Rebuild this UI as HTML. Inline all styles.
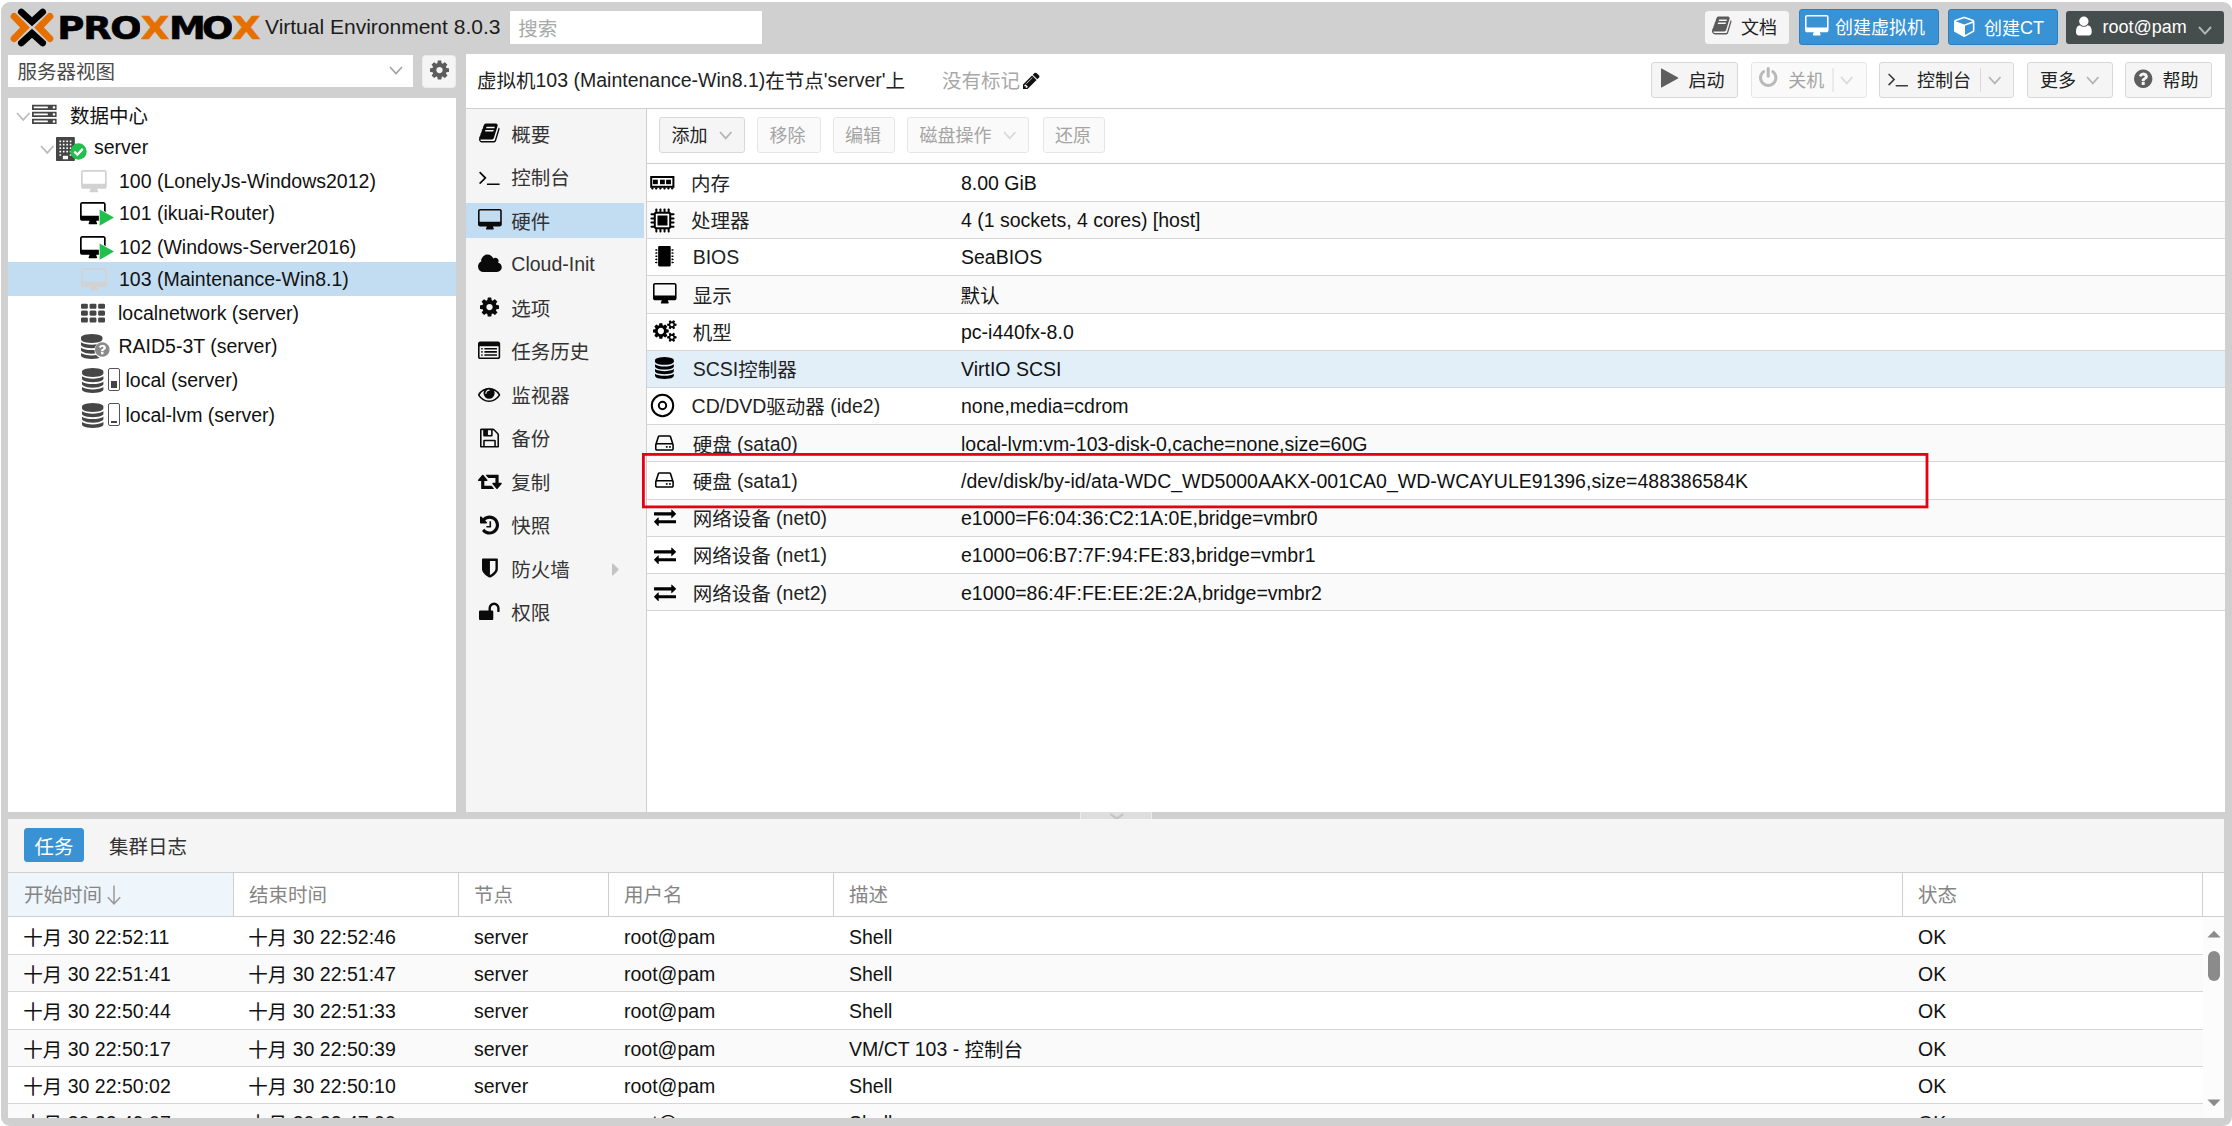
<!DOCTYPE html>
<html lang="zh-CN"><head><meta charset="utf-8"><title>server - Proxmox Virtual Environment</title><style>
html,body{margin:0;padding:0}
body{width:2232px;height:1126px;position:relative;overflow:hidden;background:#fff;font-family:"Liberation Sans","Noto Sans CJK SC",sans-serif;font-size:19.5px}
.b{position:absolute}
.t{position:absolute;white-space:nowrap}
.i{position:absolute;display:block;overflow:visible}
.c{position:relative;top:1px}
</style></head><body>
<div class="b " style="left:0.5px;top:1.8px;width:2231.5px;height:1124.2px;background:#d0d0d0;border-radius:9px"></div>
<svg class="i" style="left:9.5px;top:7.5px" width="44" height="39" viewBox="0 0 44 39">
<path d="M11.3 4 L22 13.7 L32.7 4" fill="none" stroke="#000" stroke-width="6.6" stroke-linecap="round" stroke-linejoin="miter"/>
<path d="M11.3 35 L22 25.3 L32.7 35" fill="none" stroke="#000" stroke-width="6.6" stroke-linecap="round" stroke-linejoin="miter"/>
<path d="M4.1 8.4 L15 19.5 L4.1 30.6" fill="none" stroke="#e57000" stroke-width="6.9" stroke-linecap="round" stroke-linejoin="miter"/>
<path d="M39.9 8.4 L29 19.5 L39.9 30.6" fill="none" stroke="#e57000" stroke-width="6.9" stroke-linecap="round" stroke-linejoin="miter"/>
</svg>
<svg class="i" style="left:0;top:0" width="270" height="54" viewBox="0 0 270 54"><defs><linearGradient id="lg" gradientUnits="userSpaceOnUse" x1="0" y1="0" x2="218.62" y2="0"><stop offset="0.00000" stop-color="#000"/><stop offset="0.51852" stop-color="#000"/><stop offset="0.51852" stop-color="#e57000"/><stop offset="0.63185" stop-color="#e57000"/><stop offset="0.63185" stop-color="#000"/><stop offset="0.85778" stop-color="#000"/><stop offset="0.85778" stop-color="#e57000"/><stop offset="1.00000" stop-color="#e57000"/></linearGradient></defs><text transform="translate(0 38.8) scale(1.235 1.0608)" x="46.38 67.37 89.28 113.96 136.90 163.61 187.84" font-family="DejaVu Sans, Liberation Sans, sans-serif" font-weight="bold" font-size="30" fill="url(#lg)" stroke="url(#lg)" stroke-width="0.5">PROXMOX</text></svg>
<div class="t " style="left:265px;top:12.0px;line-height:30px;height:30px;font-size:21px;color:#1c1c1c">Virtual Environment 8.0.3</div>
<div class="b " style="left:510px;top:10.5px;width:252px;height:33.7px;background:#fff"></div>
<div class="t " style="left:518.3px;top:12.899999999999999px;line-height:30px;height:30px;color:#a9a9a9"><span class="c">搜索</span></div>
<div class="b " style="left:1705px;top:10.5px;width:84px;height:33.6px;background:#f5f5f5;border-radius:3.5px"></div>
<svg class="i" style="left:1712.25px;top:15.30px;" width="19.50" height="21.00" viewBox="0 -1536 1664 1792"><path fill="#5a5a5a" transform="scale(1,-1)" d="M1639 1058q40 -57 18 -129l-275 -906q-19 -64 -76.5 -107.5t-122.5 -43.5h-923q-77 0 -148.5 53.5t-99.5 131.5q-24 67 -2 127q0 4 3 27t4 37q1 8 -3 21.5t-3 19.5q2 11 8 21t16.5 23.5t16.5 23.5q23 38 45 91.5t30 91.5q3 10 0.5 30t-0.5 28q3 11 17 28t17 23 q21 36 42 92t25 90q1 9 -2.5 32t0.5 28q4 13 22 30.5t22 22.5q19 26 42.5 84.5t27.5 96.5q1 8 -3 25.5t-2 26.5q2 8 9 18t18 23t17 21q8 12 16.5 30.5t15 35t16 36t19.5 32t26.5 23.5t36 11.5t47.5 -5.5l-1 -3q38 9 51 9h761q74 0 114 -56t18 -130l-274 -906 q-36 -119 -71.5 -153.5t-128.5 -34.5h-869q-27 0 -38 -15q-11 -16 -1 -43q24 -70 144 -70h923q29 0 56 15.5t35 41.5l300 987q7 22 5 57q38 -15 59 -43zM575 1056q-4 -13 2 -22.5t20 -9.5h608q13 0 25.5 9.5t16.5 22.5l21 64q4 13 -2 22.5t-20 9.5h-608q-13 0 -25.5 -9.5 t-16.5 -22.5zM492 800q-4 -13 2 -22.5t20 -9.5h608q13 0 25.5 9.5t16.5 22.5l21 64q4 13 -2 22.5t-20 9.5h-608q-13 0 -25.5 -9.5t-16.5 -22.5z"/></svg>
<div class="t " style="left:1741px;top:12.0px;line-height:30px;height:30px;color:#222;font-size:18px"><span class="c">文档</span></div>
<div class="b " style="left:1799px;top:9.2px;width:140.2px;height:36px;background:#3892d4;border:1px solid #2a7fc2;border-radius:3px;box-sizing:border-box"></div>
<svg class="i" style="left:1804.71px;top:14.60px;" width="23.57" height="22.00" viewBox="0 -1536 1920 1792"><path fill="#fff" transform="scale(1,-1)" d="M1792 544v832q0 13 -9.5 22.5t-22.5 9.5h-1600q-13 0 -22.5 -9.5t-9.5 -22.5v-832q0 -13 9.5 -22.5t22.5 -9.5h1600q13 0 22.5 9.5t9.5 22.5zM1920 1376v-1088q0 -66 -47 -113t-113 -47h-544q0 -37 16 -77.5t32 -71t16 -43.5q0 -26 -19 -45t-45 -19h-512q-26 0 -45 19 t-19 45q0 14 16 44t32 70t16 78h-544q-66 0 -113 47t-47 113v1088q0 66 47 113t113 47h1600q66 0 113 -47t47 -113z"/></svg>
<div class="t " style="left:1835px;top:12.2px;line-height:30px;height:30px;color:#fff;font-size:18px"><span class="c">创建虚拟机</span></div>
<div class="b " style="left:1947.8px;top:9.2px;width:110.4px;height:36px;background:#3892d4;border:1px solid #2a7fc2;border-radius:3px;box-sizing:border-box"></div>
<svg class="i" style="left:1953.50px;top:14.80px;" width="22.00" height="22.00" viewBox="0 -1536 1792 1792"><path fill="#fff" transform="scale(1,-1)" d="M896 -93l640 349v636l-640 -233v-752zM832 772l698 254l-698 254l-698 -254zM1664 1024v-768q0 -35 -18 -65t-49 -47l-704 -384q-28 -16 -61 -16t-61 16l-704 384q-31 17 -49 47t-18 65v768q0 40 23 73t61 47l704 256q22 8 44 8t44 -8l704 -256q38 -14 61 -47t23 -73z"/></svg>
<div class="t " style="left:1984px;top:12.600000000000001px;line-height:30px;height:30px;color:#fff;font-size:18px"><span class="c">创建</span>CT</div>
<div class="b " style="left:2066px;top:10.5px;width:158px;height:33.5px;background:#464d4d;border-radius:3px"></div>
<svg class="i" style="left:2075.64px;top:14.50px;" width="15.71" height="22.00" viewBox="0 -1536 1280 1792"><path fill="#fff" transform="scale(1,-1)" d="M1280 137q0 -109 -62.5 -187t-150.5 -78h-854q-88 0 -150.5 78t-62.5 187q0 85 8.5 160.5t31.5 152t58.5 131t94 89t134.5 34.5q131 -128 313 -128t313 128q76 0 134.5 -34.5t94 -89t58.5 -131t31.5 -152t8.5 -160.5zM1024 1024q0 -159 -112.5 -271.5t-271.5 -112.5 t-271.5 112.5t-112.5 271.5t112.5 271.5t271.5 112.5t271.5 -112.5t112.5 -271.5z"/></svg>
<div class="t " style="left:2102.5px;top:12.3px;line-height:30px;height:30px;color:#fff;font-size:18px">root@pam</div>
<svg class="i" style="left:2196.8px;top:24.7px" width="16" height="10.6" viewBox="-2 -2 16 10.6"><path d="M0 0L6.0 6.6L12 0" fill="none" stroke="#b4b8b8" stroke-width="1.9"/></svg>
<div class="b " style="left:8px;top:54.7px;width:405px;height:32.5px;background:#fff"></div>
<div class="t " style="left:17.5px;top:56.0px;line-height:30px;height:30px;color:#4a4a4a"><span class="c">服务器视图</span></div>
<svg class="i" style="left:388.4px;top:64.7px" width="16" height="10.6" viewBox="-2 -2 16 10.6"><path d="M0 0L6.0 6.6L12 0" fill="none" stroke="#a2a2a2" stroke-width="1.7"/></svg>
<div class="b " style="left:422px;top:54.7px;width:34px;height:33.3px;background:#f5f5f5;border:1px solid #ececec;border-radius:3.5px;box-sizing:border-box"></div>
<svg class="i" style="left:429.79px;top:58.70px;" width="19.03" height="22.20" viewBox="0 -1536 1536 1792"><path fill="#5c5c5c" transform="scale(1,-1)" d="M1024 640q0 106 -75 181t-181 75t-181 -75t-75 -181t75 -181t181 -75t181 75t75 181zM1536 749v-222q0 -12 -8 -23t-20 -13l-185 -28q-19 -54 -39 -91q35 -50 107 -138q10 -12 10 -25t-9 -23q-27 -37 -99 -108t-94 -71q-12 0 -26 9l-138 108q-44 -23 -91 -38 q-16 -136 -29 -186q-7 -28 -36 -28h-222q-14 0 -24.5 8.5t-11.5 21.5l-28 184q-49 16 -90 37l-141 -107q-10 -9 -25 -9q-14 0 -25 11q-126 114 -165 168q-7 10 -7 23q0 12 8 23q15 21 51 66.5t54 70.5q-27 50 -41 99l-183 27q-13 2 -21 12.5t-8 23.5v222q0 12 8 23t19 13 l186 28q14 46 39 92q-40 57 -107 138q-10 12 -10 24q0 10 9 23q26 36 98.5 107.5t94.5 71.5q13 0 26 -10l138 -107q44 23 91 38q16 136 29 186q7 28 36 28h222q14 0 24.5 -8.5t11.5 -21.5l28 -184q49 -16 90 -37l142 107q9 9 24 9q13 0 25 -10q129 -119 165 -170q7 -8 7 -22 q0 -12 -8 -23q-15 -21 -51 -66.5t-54 -70.5q26 -50 41 -98l183 -28q13 -2 21 -12.5t8 -23.5z"/></svg>
<div class="b " style="left:8px;top:98px;width:448px;height:713.8px;background:#fff"></div>
<div class="b " style="left:8px;top:262.3px;width:448px;height:33.7px;background:#c2ddf2"></div>
<svg class="i" style="left:14.55px;top:111.19999999999999px" width="16.5" height="10.8" viewBox="-2 -2 16.5 10.8"><path d="M0 0L6.25 6.8L12.5 0" fill="none" stroke="#bcbcbc" stroke-width="1.8"/></svg>
<svg class="i" style="left:32.20px;top:103.20px;" width="24.60" height="24.60" viewBox="0 -1536 1792 1792"><path fill="#464646" transform="scale(1,-1)" d="M128 128h1024v128h-1024v-128zM128 640h1024v128h-1024v-128zM1696 192q0 40 -28 68t-68 28t-68 -28t-28 -68t28 -68t68 -28t68 28t28 68zM128 1152h1024v128h-1024v-128zM1696 704q0 40 -28 68t-68 28t-68 -28t-28 -68t28 -68t68 -28t68 28t28 68zM1696 1216 q0 40 -28 68t-68 28t-68 -28t-28 -68t28 -68t68 -28t68 28t28 68zM1792 384v-384h-1792v384h1792zM1792 896v-384h-1792v384h1792zM1792 1408v-384h-1792v384h1792z"/></svg>
<div class="t " style="left:70px;top:100.0px;line-height:30px;height:30px;color:#111"><span class="c">数据中心</span></div>
<svg class="i" style="left:38.55px;top:144.0px" width="16.5" height="10.8" viewBox="-2 -2 16.5 10.8"><path d="M0 0L6.25 6.8L12.5 0" fill="none" stroke="#bcbcbc" stroke-width="1.8"/></svg>
<svg class="i" style="left:55.71px;top:136.50px;" width="20.57" height="24.00" viewBox="0 -1536 1536 1792"><path fill="#464646" transform="scale(1,-1)" d="M1344 1536q26 0 45 -19t19 -45v-1664q0 -26 -19 -45t-45 -19h-1280q-26 0 -45 19t-19 45v1664q0 26 19 45t45 19h1280zM512 1248v-64q0 -14 9 -23t23 -9h64q14 0 23 9t9 23v64q0 14 -9 23t-23 9h-64q-14 0 -23 -9t-9 -23zM512 992v-64q0 -14 9 -23t23 -9h64q14 0 23 9 t9 23v64q0 14 -9 23t-23 9h-64q-14 0 -23 -9t-9 -23zM512 736v-64q0 -14 9 -23t23 -9h64q14 0 23 9t9 23v64q0 14 -9 23t-23 9h-64q-14 0 -23 -9t-9 -23zM512 480v-64q0 -14 9 -23t23 -9h64q14 0 23 9t9 23v64q0 14 -9 23t-23 9h-64q-14 0 -23 -9t-9 -23zM384 160v64 q0 14 -9 23t-23 9h-64q-14 0 -23 -9t-9 -23v-64q0 -14 9 -23t23 -9h64q14 0 23 9t9 23zM384 416v64q0 14 -9 23t-23 9h-64q-14 0 -23 -9t-9 -23v-64q0 -14 9 -23t23 -9h64q14 0 23 9t9 23zM384 672v64q0 14 -9 23t-23 9h-64q-14 0 -23 -9t-9 -23v-64q0 -14 9 -23t23 -9h64 q14 0 23 9t9 23zM384 928v64q0 14 -9 23t-23 9h-64q-14 0 -23 -9t-9 -23v-64q0 -14 9 -23t23 -9h64q14 0 23 9t9 23zM384 1184v64q0 14 -9 23t-23 9h-64q-14 0 -23 -9t-9 -23v-64q0 -14 9 -23t23 -9h64q14 0 23 9t9 23zM896 -96v192q0 14 -9 23t-23 9h-320q-14 0 -23 -9 t-9 -23v-192q0 -14 9 -23t23 -9h320q14 0 23 9t9 23zM896 416v64q0 14 -9 23t-23 9h-64q-14 0 -23 -9t-9 -23v-64q0 -14 9 -23t23 -9h64q14 0 23 9t9 23zM896 672v64q0 14 -9 23t-23 9h-64q-14 0 -23 -9t-9 -23v-64q0 -14 9 -23t23 -9h64q14 0 23 9t9 23zM896 928v64 q0 14 -9 23t-23 9h-64q-14 0 -23 -9t-9 -23v-64q0 -14 9 -23t23 -9h64q14 0 23 9t9 23zM896 1184v64q0 14 -9 23t-23 9h-64q-14 0 -23 -9t-9 -23v-64q0 -14 9 -23t23 -9h64q14 0 23 9t9 23zM1152 160v64q0 14 -9 23t-23 9h-64q-14 0 -23 -9t-9 -23v-64q0 -14 9 -23t23 -9h64 q14 0 23 9t9 23zM1152 416v64q0 14 -9 23t-23 9h-64q-14 0 -23 -9t-9 -23v-64q0 -14 9 -23t23 -9h64q14 0 23 9t9 23zM1152 672v64q0 14 -9 23t-23 9h-64q-14 0 -23 -9t-9 -23v-64q0 -14 9 -23t23 -9h64q14 0 23 9t9 23zM1152 928v64q0 14 -9 23t-23 9h-64q-14 0 -23 -9 t-9 -23v-64q0 -14 9 -23t23 -9h64q14 0 23 9t9 23zM1152 1184v64q0 14 -9 23t-23 9h-64q-14 0 -23 -9t-9 -23v-64q0 -14 9 -23t23 -9h64q14 0 23 9t9 23z"/></svg>
<svg class="i" style="left:70px;top:142.5px" width="17" height="17" viewBox="0 0 17 17"><circle cx="8.5" cy="8.5" r="8.2" fill="#21bf4b"/><path d="M4.3 8.7L7.4 11.6L12.8 5.9" fill="none" stroke="#fff" stroke-width="2.3"/></svg>
<div class="t " style="left:94px;top:132.0px;line-height:30px;height:30px;color:#111">server</div>
<svg class="i" style="left:80.84px;top:169.50px;" width="25.71" height="24.00" viewBox="0 -1536 1920 1792"><path fill="#d2d2d2" transform="scale(1,-1)" d="M1792 544v832q0 13 -9.5 22.5t-22.5 9.5h-1600q-13 0 -22.5 -9.5t-9.5 -22.5v-832q0 -13 9.5 -22.5t22.5 -9.5h1600q13 0 22.5 9.5t9.5 22.5zM1920 1376v-1088q0 -66 -47 -113t-113 -47h-544q0 -37 16 -77.5t32 -71t16 -43.5q0 -26 -19 -45t-45 -19h-512q-26 0 -45 19 t-19 45q0 14 16 44t32 70t16 78h-544q-66 0 -113 47t-47 113v1088q0 66 47 113t113 47h1600q66 0 113 -47t47 -113z"/></svg>
<div class="t " style="left:119px;top:165.5px;line-height:30px;height:30px;color:#111">100 (LonelyJs-Windows2012)</div>
<svg class="i" style="left:80.34px;top:202.00px;" width="25.71" height="24.00" viewBox="0 -1536 1920 1792"><path fill="#000" transform="scale(1,-1)" d="M1792 544v832q0 13 -9.5 22.5t-22.5 9.5h-1600q-13 0 -22.5 -9.5t-9.5 -22.5v-832q0 -13 9.5 -22.5t22.5 -9.5h1600q13 0 22.5 9.5t9.5 22.5zM1920 1376v-1088q0 -66 -47 -113t-113 -47h-544q0 -37 16 -77.5t32 -71t16 -43.5q0 -26 -19 -45t-45 -19h-512q-26 0 -45 19 t-19 45q0 14 16 44t32 70t16 78h-544q-66 0 -113 47t-47 113v1088q0 66 47 113t113 47h1600q66 0 113 -47t47 -113z"/></svg>
<svg class="i" style="left:95px;top:206px" width="22" height="24" viewBox="0 0 22 24"><path d="M4.6 3.4L19 11.6L4.6 19.8Z" fill="#21bf4b" stroke="#fff" stroke-width="1.5" paint-order="stroke" stroke-linejoin="round"/></svg>
<div class="t " style="left:119px;top:198.0px;line-height:30px;height:30px;color:#111">101 (ikuai-Router)</div>
<svg class="i" style="left:80.34px;top:235.50px;" width="25.71" height="24.00" viewBox="0 -1536 1920 1792"><path fill="#000" transform="scale(1,-1)" d="M1792 544v832q0 13 -9.5 22.5t-22.5 9.5h-1600q-13 0 -22.5 -9.5t-9.5 -22.5v-832q0 -13 9.5 -22.5t22.5 -9.5h1600q13 0 22.5 9.5t9.5 22.5zM1920 1376v-1088q0 -66 -47 -113t-113 -47h-544q0 -37 16 -77.5t32 -71t16 -43.5q0 -26 -19 -45t-45 -19h-512q-26 0 -45 19 t-19 45q0 14 16 44t32 70t16 78h-544q-66 0 -113 47t-47 113v1088q0 66 47 113t113 47h1600q66 0 113 -47t47 -113z"/></svg>
<svg class="i" style="left:95px;top:239.5px" width="22" height="24" viewBox="0 0 22 24"><path d="M4.6 3.4L19 11.6L4.6 19.8Z" fill="#21bf4b" stroke="#fff" stroke-width="1.5" paint-order="stroke" stroke-linejoin="round"/></svg>
<div class="t " style="left:119px;top:231.5px;line-height:30px;height:30px;color:#111">102 (Windows-Server2016)</div>
<svg class="i" style="left:80.84px;top:268.00px;" width="25.71" height="24.00" viewBox="0 -1536 1920 1792"><path fill="#d2d2d2" transform="scale(1,-1)" d="M1792 544v832q0 13 -9.5 22.5t-22.5 9.5h-1600q-13 0 -22.5 -9.5t-9.5 -22.5v-832q0 -13 9.5 -22.5t22.5 -9.5h1600q13 0 22.5 9.5t9.5 22.5zM1920 1376v-1088q0 -66 -47 -113t-113 -47h-544q0 -37 16 -77.5t32 -71t16 -43.5q0 -26 -19 -45t-45 -19h-512q-26 0 -45 19 t-19 45q0 14 16 44t32 70t16 78h-544q-66 0 -113 47t-47 113v1088q0 66 47 113t113 47h1600q66 0 113 -47t47 -113z"/></svg>
<div class="t " style="left:119px;top:264.0px;line-height:30px;height:30px;color:#111">103 (Maintenance-Win8.1)</div>
<svg class="i" style="left:80.70px;top:301.50px;" width="24.00" height="24.00" viewBox="0 -1536 1792 1792"><path fill="#464646" transform="scale(1,-1)" d="M512 288v-192q0 -40 -28 -68t-68 -28h-320q-40 0 -68 28t-28 68v192q0 40 28 68t68 28h320q40 0 68 -28t28 -68zM512 800v-192q0 -40 -28 -68t-68 -28h-320q-40 0 -68 28t-28 68v192q0 40 28 68t68 28h320q40 0 68 -28t28 -68zM1152 288v-192q0 -40 -28 -68t-68 -28h-320 q-40 0 -68 28t-28 68v192q0 40 28 68t68 28h320q40 0 68 -28t28 -68zM512 1312v-192q0 -40 -28 -68t-68 -28h-320q-40 0 -68 28t-28 68v192q0 40 28 68t68 28h320q40 0 68 -28t28 -68zM1152 800v-192q0 -40 -28 -68t-68 -28h-320q-40 0 -68 28t-28 68v192q0 40 28 68t68 28 h320q40 0 68 -28t28 -68zM1792 288v-192q0 -40 -28 -68t-68 -28h-320q-40 0 -68 28t-28 68v192q0 40 28 68t68 28h320q40 0 68 -28t28 -68zM1152 1312v-192q0 -40 -28 -68t-68 -28h-320q-40 0 -68 28t-28 68v192q0 40 28 68t68 28h320q40 0 68 -28t28 -68zM1792 800v-192 q0 -40 -28 -68t-68 -28h-320q-40 0 -68 28t-28 68v192q0 40 28 68t68 28h320q40 0 68 -28t28 -68zM1792 1312v-192q0 -40 -28 -68t-68 -28h-320q-40 0 -68 28t-28 68v192q0 40 28 68t68 28h320q40 0 68 -28t28 -68z"/></svg>
<div class="t " style="left:118px;top:297.5px;line-height:30px;height:30px;color:#111">localnetwork (server)</div>
<svg class="i" style="left:80.59px;top:333.70px;" width="21.43" height="25.00" viewBox="0 -1536 1536 1792"><path fill="#464646" transform="scale(1,-1)" d="M768 768q237 0 443 43t325 127v-170q0 -69 -103 -128t-280 -93.5t-385 -34.5t-385 34.5t-280 93.5t-103 128v170q119 -84 325 -127t443 -43zM768 0q237 0 443 43t325 127v-170q0 -69 -103 -128t-280 -93.5t-385 -34.5t-385 34.5t-280 93.5t-103 128v170q119 -84 325 -127 t443 -43zM768 384q237 0 443 43t325 127v-170q0 -69 -103 -128t-280 -93.5t-385 -34.5t-385 34.5t-280 93.5t-103 128v170q119 -84 325 -127t443 -43zM768 1536q208 0 385 -34.5t280 -93.5t103 -128v-128q0 -69 -103 -128t-280 -93.5t-385 -34.5t-385 34.5t-280 93.5 t-103 128v128q0 69 103 128t280 93.5t385 34.5z"/></svg>
<svg class="i" style="left:93.5px;top:340.5px" width="18" height="18" viewBox="0 0 18 18"><circle cx="9" cy="9" r="8.6" fill="#fff"/></svg>
<svg class="i" style="left:95.21px;top:341.00px;" width="14.57" height="17.00" viewBox="0 -1536 1536 1792"><path fill="#8a8a8a" transform="scale(1,-1)" d="M896 160v192q0 14 -9 23t-23 9h-192q-14 0 -23 -9t-9 -23v-192q0 -14 9 -23t23 -9h192q14 0 23 9t9 23zM1152 832q0 88 -55.5 163t-138.5 116t-170 41q-243 0 -371 -213q-15 -24 8 -42l132 -100q7 -6 19 -6q16 0 25 12q53 68 86 92q34 24 86 24q48 0 85.5 -26t37.5 -59 q0 -38 -20 -61t-68 -45q-63 -28 -115.5 -86.5t-52.5 -125.5v-36q0 -14 9 -23t23 -9h192q14 0 23 9t9 23q0 19 21.5 49.5t54.5 49.5q32 18 49 28.5t46 35t44.5 48t28 60.5t12.5 81zM1536 640q0 -209 -103 -385.5t-279.5 -279.5t-385.5 -103t-385.5 103t-279.5 279.5 t-103 385.5t103 385.5t279.5 279.5t385.5 103t385.5 -103t279.5 -279.5t103 -385.5z"/></svg>
<div class="t " style="left:118.5px;top:330.5px;line-height:30px;height:30px;color:#111">RAID5-3T (server)</div>
<svg class="i" style="left:81.99px;top:367.50px;" width="21.43" height="25.00" viewBox="0 -1536 1536 1792"><path fill="#464646" transform="scale(1,-1)" d="M768 768q237 0 443 43t325 127v-170q0 -69 -103 -128t-280 -93.5t-385 -34.5t-385 34.5t-280 93.5t-103 128v170q119 -84 325 -127t443 -43zM768 0q237 0 443 43t325 127v-170q0 -69 -103 -128t-280 -93.5t-385 -34.5t-385 34.5t-280 93.5t-103 128v170q119 -84 325 -127 t443 -43zM768 384q237 0 443 43t325 127v-170q0 -69 -103 -128t-280 -93.5t-385 -34.5t-385 34.5t-280 93.5t-103 128v170q119 -84 325 -127t443 -43zM768 1536q208 0 385 -34.5t280 -93.5t103 -128v-128q0 -69 -103 -128t-280 -93.5t-385 -34.5t-385 34.5t-280 93.5 t-103 128v128q0 69 103 128t280 93.5t385 34.5z"/></svg>
<div class="b" style="left:108px;top:368.2px;width:12px;height:22.5px;border:1px solid #555;border-radius:2px;box-sizing:border-box;background:#fff"></div>
<div class="b" style="left:110.8px;top:380.7px;width:6.4px;height:7px;background:#444"></div>
<div class="t " style="left:125.5px;top:364.5px;line-height:30px;height:30px;color:#111">local (server)</div>
<svg class="i" style="left:81.99px;top:403.00px;" width="21.43" height="25.00" viewBox="0 -1536 1536 1792"><path fill="#464646" transform="scale(1,-1)" d="M768 768q237 0 443 43t325 127v-170q0 -69 -103 -128t-280 -93.5t-385 -34.5t-385 34.5t-280 93.5t-103 128v170q119 -84 325 -127t443 -43zM768 0q237 0 443 43t325 127v-170q0 -69 -103 -128t-280 -93.5t-385 -34.5t-385 34.5t-280 93.5t-103 128v170q119 -84 325 -127 t443 -43zM768 384q237 0 443 43t325 127v-170q0 -69 -103 -128t-280 -93.5t-385 -34.5t-385 34.5t-280 93.5t-103 128v170q119 -84 325 -127t443 -43zM768 1536q208 0 385 -34.5t280 -93.5t103 -128v-128q0 -69 -103 -128t-280 -93.5t-385 -34.5t-385 34.5t-280 93.5 t-103 128v128q0 69 103 128t280 93.5t385 34.5z"/></svg>
<div class="b" style="left:108px;top:403.3px;width:12px;height:22.5px;border:1px solid #555;border-radius:2px;box-sizing:border-box;background:#fff"></div>
<div class="b" style="left:110.8px;top:421.40000000000003px;width:6.4px;height:1.4px;background:#444"></div>
<div class="t " style="left:125.5px;top:399.5px;line-height:30px;height:30px;color:#111">local-lvm (server)</div>
<div class="b " style="left:465.5px;top:53.7px;width:1759.5px;height:758.1px;background:#fff"></div>
<div class="t " style="left:477px;top:64.7px;line-height:30px;height:30px;color:#222"><span class="c">虚拟机</span>103 (Maintenance-Win8.1)<span class="c">在节点</span>'server'<span class="c">上</span></div>
<div class="t " style="left:942px;top:64.7px;line-height:30px;height:30px;color:#a8a8a8"><span class="c">没有标记</span></div>
<svg class="i" style="left:1022.64px;top:70.75px;" width="16.71" height="19.50" viewBox="0 -1536 1536 1792"><path fill="#111" transform="scale(1,-1)" d="M363 0l91 91l-235 235l-91 -91v-107h128v-128h107zM886 928q0 22 -22 22q-10 0 -17 -7l-542 -542q-7 -7 -7 -17q0 -22 22 -22q10 0 17 7l542 542q7 7 7 17zM832 1120l416 -416l-832 -832h-416v416zM1515 1024q0 -53 -37 -90l-166 -166l-416 416l166 165q36 38 90 38 q53 0 91 -38l235 -234q37 -39 37 -91z"/></svg>
<div class="b " style="left:1651px;top:62px;width:86.6px;height:35.5px;background:#f5f5f5;border:1px solid #d8d8d8;border-radius:3px;box-sizing:border-box"></div>
<svg class="i" style="left:1661.06px;top:66.80px;" width="17.29" height="22.00" viewBox="0 -1536 1408 1792"><path fill="#5e5e5e" transform="scale(1,-1)" d="M1384 609l-1328 -738q-23 -13 -39.5 -3t-16.5 36v1472q0 26 16.5 36t39.5 -3l1328 -738q23 -13 23 -31t-23 -31z"/></svg>
<div class="t " style="left:1688.5px;top:65.2px;line-height:30px;height:30px;color:#222;font-size:18px"><span class="c">启动</span></div>
<div class="b " style="left:1751px;top:62px;width:115.6px;height:35.5px;background:#fafafa;border:1px solid #e6e6e6;border-radius:3px;box-sizing:border-box"></div>
<svg class="i" style="left:1758.79px;top:67.25px;" width="18.43" height="21.50" viewBox="0 -1536 1536 1792"><path fill="#b9b9b9" transform="scale(1,-1)" d="M1536 640q0 -156 -61 -298t-164 -245t-245 -164t-298 -61t-298 61t-245 164t-164 245t-61 298q0 182 80.5 343t226.5 270q43 32 95.5 25t83.5 -50q32 -42 24.5 -94.5t-49.5 -84.5q-98 -74 -151.5 -181t-53.5 -228q0 -104 40.5 -198.5t109.5 -163.5t163.5 -109.5 t198.5 -40.5t198.5 40.5t163.5 109.5t109.5 163.5t40.5 198.5q0 121 -53.5 228t-151.5 181q-42 32 -49.5 84.5t24.5 94.5q31 43 84 50t95 -25q146 -109 226.5 -270t80.5 -343zM896 1408v-640q0 -52 -38 -90t-90 -38t-90 38t-38 90v640q0 52 38 90t90 38t90 -38t38 -90z"/></svg>
<div class="t " style="left:1788.3px;top:65.2px;line-height:30px;height:30px;color:#a4a4a4;font-size:18px"><span class="c">关机</span></div>
<div class="b " style="left:1832.3px;top:68px;width:1.4px;height:23.5px;background:#ebebeb"></div>
<svg class="i" style="left:1839.25px;top:75.44999999999999px" width="15.5" height="10.3" viewBox="-2 -2 15.5 10.3"><path d="M0 0L5.75 6.3L11.5 0" fill="none" stroke="#dadada" stroke-width="1.8"/></svg>
<div class="b " style="left:1879px;top:62px;width:134.6px;height:35.5px;background:#f5f5f5;border:1px solid #d8d8d8;border-radius:3px;box-sizing:border-box"></div>
<svg class="i" style="left:1887.52px;top:67.85px;" width="19.96" height="21.50" viewBox="0 -1536 1664 1792"><path fill="#3c3c3c" transform="scale(1,-1)" d="M585 553l-466 -466q-10 -10 -23 -10t-23 10l-50 50q-10 10 -10 23t10 23l393 393l-393 393q-10 10 -10 23t10 23l50 50q10 10 23 10t23 -10l466 -466q10 -10 10 -23t-10 -23zM1664 96v-64q0 -14 -9 -23t-23 -9h-960q-14 0 -23 9t-9 23v64q0 14 9 23t23 9h960q14 0 23 -9 t9 -23z"/></svg>
<div class="t " style="left:1917px;top:65.2px;line-height:30px;height:30px;color:#222;font-size:18px"><span class="c">控制台</span></div>
<div class="b " style="left:1979.8px;top:68px;width:1.4px;height:23.5px;background:#dadada"></div>
<svg class="i" style="left:1987.25px;top:75.14999999999999px" width="15.5" height="10.3" viewBox="-2 -2 15.5 10.3"><path d="M0 0L5.75 6.3L11.5 0" fill="none" stroke="#b4b4b4" stroke-width="1.8"/></svg>
<div class="b " style="left:2027px;top:62px;width:85.6px;height:35.5px;background:#f5f5f5;border:1px solid #d8d8d8;border-radius:3px;box-sizing:border-box"></div>
<div class="t " style="left:2040px;top:65.2px;line-height:30px;height:30px;color:#222;font-size:18px"><span class="c">更多</span></div>
<svg class="i" style="left:2085.25px;top:74.64999999999999px" width="15.5" height="10.3" viewBox="-2 -2 15.5 10.3"><path d="M0 0L5.75 6.3L11.5 0" fill="none" stroke="#b4b4b4" stroke-width="1.8"/></svg>
<div class="b " style="left:2125px;top:62px;width:86.6px;height:35.5px;background:#f5f5f5;border:1px solid #d8d8d8;border-radius:3px;box-sizing:border-box"></div>
<svg class="i" style="left:2133.79px;top:68.25px;" width="18.43" height="21.50" viewBox="0 -1536 1536 1792"><path fill="#5e5e5e" transform="scale(1,-1)" d="M896 160v192q0 14 -9 23t-23 9h-192q-14 0 -23 -9t-9 -23v-192q0 -14 9 -23t23 -9h192q14 0 23 9t9 23zM1152 832q0 88 -55.5 163t-138.5 116t-170 41q-243 0 -371 -213q-15 -24 8 -42l132 -100q7 -6 19 -6q16 0 25 12q53 68 86 92q34 24 86 24q48 0 85.5 -26t37.5 -59 q0 -38 -20 -61t-68 -45q-63 -28 -115.5 -86.5t-52.5 -125.5v-36q0 -14 9 -23t23 -9h192q14 0 23 9t9 23q0 19 21.5 49.5t54.5 49.5q32 18 49 28.5t46 35t44.5 48t28 60.5t12.5 81zM1536 640q0 -209 -103 -385.5t-279.5 -279.5t-385.5 -103t-385.5 103t-279.5 279.5 t-103 385.5t103 385.5t279.5 279.5t385.5 103t385.5 -103t279.5 -279.5t103 -385.5z"/></svg>
<div class="t " style="left:2162.5px;top:65.2px;line-height:30px;height:30px;color:#222;font-size:18px"><span class="c">帮助</span></div>
<div class="b " style="left:465.5px;top:108px;width:1759.5px;height:1px;background:#cfcfcf"></div>
<div class="b " style="left:465.5px;top:109px;width:180.5px;height:702.8px;background:#f5f5f5"></div>
<div class="b " style="left:646px;top:109px;width:1px;height:702.8px;background:#cfcfcf"></div>
<div class="b " style="left:465.5px;top:202.7px;width:178.5px;height:35.6px;background:#c2ddf2"></div>
<svg class="i" style="left:479.19px;top:122.20px;" width="20.61" height="22.20" viewBox="0 -1536 1664 1792"><path fill="#0a0a0a" transform="scale(1,-1)" d="M1639 1058q40 -57 18 -129l-275 -906q-19 -64 -76.5 -107.5t-122.5 -43.5h-923q-77 0 -148.5 53.5t-99.5 131.5q-24 67 -2 127q0 4 3 27t4 37q1 8 -3 21.5t-3 19.5q2 11 8 21t16.5 23.5t16.5 23.5q23 38 45 91.5t30 91.5q3 10 0.5 30t-0.5 28q3 11 17 28t17 23 q21 36 42 92t25 90q1 9 -2.5 32t0.5 28q4 13 22 30.5t22 22.5q19 26 42.5 84.5t27.5 96.5q1 8 -3 25.5t-2 26.5q2 8 9 18t18 23t17 21q8 12 16.5 30.5t15 35t16 36t19.5 32t26.5 23.5t36 11.5t47.5 -5.5l-1 -3q38 9 51 9h761q74 0 114 -56t18 -130l-274 -906 q-36 -119 -71.5 -153.5t-128.5 -34.5h-869q-27 0 -38 -15q-11 -16 -1 -43q24 -70 144 -70h923q29 0 56 15.5t35 41.5l300 987q7 22 5 57q38 -15 59 -43zM575 1056q-4 -13 2 -22.5t20 -9.5h608q13 0 25.5 9.5t16.5 22.5l21 64q4 13 -2 22.5t-20 9.5h-608q-13 0 -25.5 -9.5 t-16.5 -22.5zM492 800q-4 -13 2 -22.5t20 -9.5h608q13 0 25.5 9.5t16.5 22.5l21 64q4 13 -2 22.5t-20 9.5h-608q-13 0 -25.5 -9.5t-16.5 -22.5z"/></svg>
<div class="t " style="left:511.3px;top:118.5px;line-height:30px;height:30px;color:#333"><span class="c">概要</span></div>
<svg class="i" style="left:479.19px;top:165.70px;" width="20.61" height="22.20" viewBox="0 -1536 1664 1792"><path fill="#0a0a0a" transform="scale(1,-1)" d="M585 553l-466 -466q-10 -10 -23 -10t-23 10l-50 50q-10 10 -10 23t10 23l393 393l-393 393q-10 10 -10 23t10 23l50 50q10 10 23 10t23 -10l466 -466q10 -10 10 -23t-10 -23zM1664 96v-64q0 -14 -9 -23t-23 -9h-960q-14 0 -23 9t-9 23v64q0 14 9 23t23 9h960q14 0 23 -9 t9 -23z"/></svg>
<div class="t " style="left:511.3px;top:162.0px;line-height:30px;height:30px;color:#333"><span class="c">控制台</span></div>
<svg class="i" style="left:477.61px;top:209.20px;" width="23.79" height="22.20" viewBox="0 -1536 1920 1792"><path fill="#0a0a0a" transform="scale(1,-1)" d="M1792 544v832q0 13 -9.5 22.5t-22.5 9.5h-1600q-13 0 -22.5 -9.5t-9.5 -22.5v-832q0 -13 9.5 -22.5t22.5 -9.5h1600q13 0 22.5 9.5t9.5 22.5zM1920 1376v-1088q0 -66 -47 -113t-113 -47h-544q0 -37 16 -77.5t32 -71t16 -43.5q0 -26 -19 -45t-45 -19h-512q-26 0 -45 19 t-19 45q0 14 16 44t32 70t16 78h-544q-66 0 -113 47t-47 113v1088q0 66 47 113t113 47h1600q66 0 113 -47t47 -113z"/></svg>
<div class="t " style="left:511.3px;top:205.5px;line-height:30px;height:30px;color:#333"><span class="c">硬件</span></div>
<svg class="i" style="left:477.61px;top:252.70px;" width="23.79" height="22.20" viewBox="0 -1536 1920 1792"><path fill="#0a0a0a" transform="scale(1,-1)" d="M1920 384q0 -159 -112.5 -271.5t-271.5 -112.5h-1088q-185 0 -316.5 131.5t-131.5 316.5q0 132 71 241.5t187 163.5q-2 28 -2 43q0 212 150 362t362 150q158 0 286.5 -88t187.5 -230q70 62 166 62q106 0 181 -75t75 -181q0 -75 -41 -138q129 -30 213 -134.5t84 -239.5z"/></svg>
<div class="t " style="left:511.3px;top:249.0px;line-height:30px;height:30px;color:#333">Cloud-Init</div>
<svg class="i" style="left:479.99px;top:296.20px;" width="19.03" height="22.20" viewBox="0 -1536 1536 1792"><path fill="#0a0a0a" transform="scale(1,-1)" d="M1024 640q0 106 -75 181t-181 75t-181 -75t-75 -181t75 -181t181 -75t181 75t75 181zM1536 749v-222q0 -12 -8 -23t-20 -13l-185 -28q-19 -54 -39 -91q35 -50 107 -138q10 -12 10 -25t-9 -23q-27 -37 -99 -108t-94 -71q-12 0 -26 9l-138 108q-44 -23 -91 -38 q-16 -136 -29 -186q-7 -28 -36 -28h-222q-14 0 -24.5 8.5t-11.5 21.5l-28 184q-49 16 -90 37l-141 -107q-10 -9 -25 -9q-14 0 -25 11q-126 114 -165 168q-7 10 -7 23q0 12 8 23q15 21 51 66.5t54 70.5q-27 50 -41 99l-183 27q-13 2 -21 12.5t-8 23.5v222q0 12 8 23t19 13 l186 28q14 46 39 92q-40 57 -107 138q-10 12 -10 24q0 10 9 23q26 36 98.5 107.5t94.5 71.5q13 0 26 -10l138 -107q44 23 91 38q16 136 29 186q7 28 36 28h222q14 0 24.5 -8.5t11.5 -21.5l28 -184q49 -16 90 -37l142 107q9 9 24 9q13 0 25 -10q129 -119 165 -170q7 -8 7 -22 q0 -12 -8 -23q-15 -21 -51 -66.5t-54 -70.5q26 -50 41 -98l183 -28q13 -2 21 -12.5t8 -23.5z"/></svg>
<div class="t " style="left:511.3px;top:292.5px;line-height:30px;height:30px;color:#333"><span class="c">选项</span></div>
<svg class="i" style="left:478.40px;top:339.70px;" width="22.20" height="22.20" viewBox="0 -1536 1792 1792"><path fill="#0a0a0a" transform="scale(1,-1)" d="M384 352v-64q0 -13 -9.5 -22.5t-22.5 -9.5h-64q-13 0 -22.5 9.5t-9.5 22.5v64q0 13 9.5 22.5t22.5 9.5h64q13 0 22.5 -9.5t9.5 -22.5zM384 608v-64q0 -13 -9.5 -22.5t-22.5 -9.5h-64q-13 0 -22.5 9.5t-9.5 22.5v64q0 13 9.5 22.5t22.5 9.5h64q13 0 22.5 -9.5t9.5 -22.5z M384 864v-64q0 -13 -9.5 -22.5t-22.5 -9.5h-64q-13 0 -22.5 9.5t-9.5 22.5v64q0 13 9.5 22.5t22.5 9.5h64q13 0 22.5 -9.5t9.5 -22.5zM1536 352v-64q0 -13 -9.5 -22.5t-22.5 -9.5h-960q-13 0 -22.5 9.5t-9.5 22.5v64q0 13 9.5 22.5t22.5 9.5h960q13 0 22.5 -9.5t9.5 -22.5z M1536 608v-64q0 -13 -9.5 -22.5t-22.5 -9.5h-960q-13 0 -22.5 9.5t-9.5 22.5v64q0 13 9.5 22.5t22.5 9.5h960q13 0 22.5 -9.5t9.5 -22.5zM1536 864v-64q0 -13 -9.5 -22.5t-22.5 -9.5h-960q-13 0 -22.5 9.5t-9.5 22.5v64q0 13 9.5 22.5t22.5 9.5h960q13 0 22.5 -9.5 t9.5 -22.5zM1664 160v832q0 13 -9.5 22.5t-22.5 9.5h-1472q-13 0 -22.5 -9.5t-9.5 -22.5v-832q0 -13 9.5 -22.5t22.5 -9.5h1472q13 0 22.5 9.5t9.5 22.5zM1792 1248v-1088q0 -66 -47 -113t-113 -47h-1472q-66 0 -113 47t-47 113v1088q0 66 47 113t113 47h1472q66 0 113 -47 t47 -113z"/></svg>
<div class="t " style="left:511.3px;top:336.0px;line-height:30px;height:30px;color:#333"><span class="c">任务历史</span></div>
<svg class="i" style="left:478.40px;top:383.20px;" width="22.20" height="22.20" viewBox="0 -1536 1792 1792"><path fill="#0a0a0a" transform="scale(1,-1)" d="M1664 576q-152 236 -381 353q61 -104 61 -225q0 -185 -131.5 -316.5t-316.5 -131.5t-316.5 131.5t-131.5 316.5q0 121 61 225q-229 -117 -381 -353q133 -205 333.5 -326.5t434.5 -121.5t434.5 121.5t333.5 326.5zM944 960q0 20 -14 34t-34 14q-125 0 -214.5 -89.5 t-89.5 -214.5q0 -20 14 -34t34 -14t34 14t14 34q0 86 61 147t147 61q20 0 34 14t14 34zM1792 576q0 -34 -20 -69q-140 -230 -376.5 -368.5t-499.5 -138.5t-499.5 139t-376.5 368q-20 35 -20 69t20 69q140 229 376.5 368t499.5 139t499.5 -139t376.5 -368q20 -35 20 -69z"/></svg>
<div class="t " style="left:511.3px;top:379.5px;line-height:30px;height:30px;color:#333"><span class="c">监视器</span></div>
<svg class="i" style="left:479.99px;top:426.70px;" width="19.03" height="22.20" viewBox="0 -1536 1536 1792"><path fill="#0a0a0a" transform="scale(1,-1)" d="M384 0h768v384h-768v-384zM1280 0h128v896q0 14 -10 38.5t-20 34.5l-281 281q-10 10 -34 20t-39 10v-416q0 -40 -28 -68t-68 -28h-576q-40 0 -68 28t-28 68v416h-128v-1280h128v416q0 40 28 68t68 28h832q40 0 68 -28t28 -68v-416zM896 928v320q0 13 -9.5 22.5t-22.5 9.5 h-192q-13 0 -22.5 -9.5t-9.5 -22.5v-320q0 -13 9.5 -22.5t22.5 -9.5h192q13 0 22.5 9.5t9.5 22.5zM1536 896v-928q0 -40 -28 -68t-68 -28h-1344q-40 0 -68 28t-28 68v1344q0 40 28 68t68 28h928q40 0 88 -20t76 -48l280 -280q28 -28 48 -76t20 -88z"/></svg>
<div class="t " style="left:511.3px;top:423.0px;line-height:30px;height:30px;color:#333"><span class="c">备份</span></div>
<svg class="i" style="left:477.61px;top:470.20px;" width="23.79" height="22.20" viewBox="0 -1536 1920 1792"><path fill="#0a0a0a" transform="scale(1,-1)" d="M1280 32q0 -13 -9.5 -22.5t-22.5 -9.5h-960q-8 0 -13.5 2t-9 7t-5.5 8t-3 11.5t-1 11.5v13v11v160v416h-192q-26 0 -45 19t-19 45q0 24 15 41l320 384q19 22 49 22t49 -22l320 -384q15 -17 15 -41q0 -26 -19 -45t-45 -19h-192v-384h576q16 0 25 -11l160 -192q7 -10 7 -21 zM1920 448q0 -24 -15 -41l-320 -384q-20 -23 -49 -23t-49 23l-320 384q-15 17 -15 41q0 26 19 45t45 19h192v384h-576q-16 0 -25 12l-160 192q-7 9 -7 20q0 13 9.5 22.5t22.5 9.5h960q8 0 13.5 -2t9 -7t5.5 -8t3 -11.5t1 -11.5v-13v-11v-160v-416h192q26 0 45 -19t19 -45z"/></svg>
<div class="t " style="left:511.3px;top:466.5px;line-height:30px;height:30px;color:#333"><span class="c">复制</span></div>
<svg class="i" style="left:479.99px;top:513.70px;" width="19.03" height="22.20" viewBox="0 -1536 1536 1792"><path fill="#0a0a0a" transform="scale(1,-1)" d="M1536 640q0 -156 -61 -298t-164 -245t-245 -164t-298 -61q-172 0 -327 72.5t-264 204.5q-7 10 -6.5 22.5t8.5 20.5l137 138q10 9 25 9q16 -2 23 -12q73 -95 179 -147t225 -52q104 0 198.5 40.5t163.5 109.5t109.5 163.5t40.5 198.5t-40.5 198.5t-109.5 163.5 t-163.5 109.5t-198.5 40.5q-98 0 -188 -35.5t-160 -101.5l137 -138q31 -30 14 -69q-17 -40 -59 -40h-448q-26 0 -45 19t-19 45v448q0 42 40 59q39 17 69 -14l130 -129q107 101 244.5 156.5t284.5 55.5q156 0 298 -61t245 -164t164 -245t61 -298zM896 928v-448q0 -14 -9 -23 t-23 -9h-320q-14 0 -23 9t-9 23v64q0 14 9 23t23 9h224v352q0 14 9 23t23 9h64q14 0 23 -9t9 -23z"/></svg>
<div class="t " style="left:511.3px;top:510.0px;line-height:30px;height:30px;color:#333"><span class="c">快照</span></div>
<svg class="i" style="left:481.57px;top:557.20px;" width="15.86" height="22.20" viewBox="0 -1536 1280 1792"><path fill="#0a0a0a" transform="scale(1,-1)" d="M1088 576v640h-448v-1137q119 63 213 137q235 184 235 360zM1280 1344v-768q0 -86 -33.5 -170.5t-83 -150t-118 -127.5t-126.5 -103t-121 -77.5t-89.5 -49.5t-42.5 -20q-12 -6 -26 -6t-26 6q-16 7 -42.5 20t-89.5 49.5t-121 77.5t-126.5 103t-118 127.5t-83 150 t-33.5 170.5v768q0 26 19 45t45 19h1152q26 0 45 -19t19 -45z"/></svg>
<div class="t " style="left:511.3px;top:553.5px;line-height:30px;height:30px;color:#333"><span class="c">防火墙</span></div>
<svg class="i" style="left:479.19px;top:600.70px;" width="20.61" height="22.20" viewBox="0 -1536 1664 1792"><path fill="#0a0a0a" transform="scale(1,-1)" d="M1664 960v-256q0 -26 -19 -45t-45 -19h-64q-26 0 -45 19t-19 45v256q0 106 -75 181t-181 75t-181 -75t-75 -181v-192h96q40 0 68 -28t28 -68v-576q0 -40 -28 -68t-68 -28h-960q-40 0 -68 28t-28 68v576q0 40 28 68t68 28h672v192q0 185 131.5 316.5t316.5 131.5 t316.5 -131.5t131.5 -316.5z"/></svg>
<div class="t " style="left:511.3px;top:597.0px;line-height:30px;height:30px;color:#333"><span class="c">权限</span></div>
<svg class="i" style="left:611.75px;top:558.50px;" width="7.50" height="21.00" viewBox="0 -1536 640 1792"><path fill="#c4c4c4" transform="scale(1,-1)" d="M576 640q0 -26 -19 -45l-448 -448q-19 -19 -45 -19t-45 19t-19 45v896q0 26 19 45t45 19t45 -19l448 -448q19 -19 19 -45z"/></svg>
<div class="b " style="left:659px;top:117px;width:86px;height:36px;background:#f5f5f5;border:1px solid #d8d8d8;border-radius:3px;box-sizing:border-box"></div>
<div class="t " style="left:671.5px;top:120.0px;line-height:30px;height:30px;color:#222;font-size:18px"><span class="c">添加</span></div>
<svg class="i" style="left:717.75px;top:129.85px" width="15.5" height="10.3" viewBox="-2 -2 15.5 10.3"><path d="M0 0L5.75 6.3L11.5 0" fill="none" stroke="#b4b4b4" stroke-width="1.8"/></svg>
<div class="b " style="left:757px;top:117px;width:64px;height:36px;background:#fafafa;border:1px solid #e6e6e6;border-radius:3px;box-sizing:border-box"></div>
<div class="t " style="left:769.5px;top:120.0px;line-height:30px;height:30px;color:#a4a4a4;font-size:18px"><span class="c">移除</span></div>
<div class="b " style="left:832.5px;top:117px;width:62.5px;height:36px;background:#fafafa;border:1px solid #e6e6e6;border-radius:3px;box-sizing:border-box"></div>
<div class="t " style="left:845.0px;top:120.0px;line-height:30px;height:30px;color:#a4a4a4;font-size:18px"><span class="c">编辑</span></div>
<div class="b " style="left:907px;top:117px;width:122px;height:36px;background:#fafafa;border:1px solid #e6e6e6;border-radius:3px;box-sizing:border-box"></div>
<div class="t " style="left:919.5px;top:120.0px;line-height:30px;height:30px;color:#a4a4a4;font-size:18px"><span class="c">磁盘操作</span></div>
<svg class="i" style="left:1001.75px;top:129.85px" width="15.5" height="10.3" viewBox="-2 -2 15.5 10.3"><path d="M0 0L5.75 6.3L11.5 0" fill="none" stroke="#dadada" stroke-width="1.8"/></svg>
<div class="b " style="left:1042.6px;top:117px;width:62.4px;height:36px;background:#fafafa;border:1px solid #e6e6e6;border-radius:3px;box-sizing:border-box"></div>
<div class="t " style="left:1055.1px;top:120.0px;line-height:30px;height:30px;color:#a4a4a4;font-size:18px"><span class="c">还原</span></div>
<div class="b " style="left:647px;top:163px;width:1578px;height:1px;background:#cfcfcf"></div>
<div class="b " style="left:647px;top:164.6px;width:1578px;height:36.23px;background:#fff"></div>
<div class="b " style="left:647px;top:200.83px;width:1578px;height:1px;background:#d6d6d6"></div>
<svg class="i" style="left:650px;top:175.00px" width="26" height="16" viewBox="0 0 26 16"><rect x="1.2" y="12.4" width="2.4" height="2" rx="0.8" fill="#000"/><rect x="5.0" y="12.4" width="2.4" height="2" rx="0.8" fill="#000"/><rect x="9.2" y="12.4" width="2.4" height="2" rx="0.8" fill="#000"/><rect x="13.3" y="12.4" width="2.4" height="2" rx="0.8" fill="#000"/><rect x="17.2" y="12.4" width="2.4" height="2" rx="0.8" fill="#000"/><rect x="21.0" y="12.4" width="2.4" height="2" rx="0.8" fill="#000"/><rect x="1.2" y="2" width="22.2" height="9.8" fill="#fff" stroke="#000" stroke-width="2"/><rect x="2.9" y="4.7" width="4.9" height="4.5" fill="#000"/><rect x="10" y="4.7" width="4.8" height="4.5" fill="#000"/><rect x="16.1" y="4.7" width="4.8" height="4.5" fill="#000"/></svg>
<div class="t " style="left:691px;top:167.99999999999997px;line-height:30px;height:30px;color:#222"><span class="c">内存</span></div>
<div class="t " style="left:961px;top:167.99999999999997px;line-height:30px;height:30px;color:#111">8.00 GiB</div>
<div class="b " style="left:647px;top:201.83px;width:1578px;height:36.23px;background:#fafafa"></div>
<div class="b " style="left:647px;top:238.06px;width:1578px;height:1px;background:#d6d6d6"></div>
<svg class="i" style="left:649.8px;top:207.73px" width="25" height="25" viewBox="0 0 25 25"><rect x="5.35" y="0.5" width="2" height="24" rx="0.8" fill="#000"/><rect y="5.35" x="0.5" height="2" width="24" rx="0.8" fill="#000"/><rect x="9.45" y="0.5" width="2" height="24" rx="0.8" fill="#000"/><rect y="9.45" x="0.5" height="2" width="24" rx="0.8" fill="#000"/><rect x="13.55" y="0.5" width="2" height="24" rx="0.8" fill="#000"/><rect y="13.55" x="0.5" height="2" width="24" rx="0.8" fill="#000"/><rect x="17.65" y="0.5" width="2" height="24" rx="0.8" fill="#000"/><rect y="17.65" x="0.5" height="2" width="24" rx="0.8" fill="#000"/><rect x="4.8" y="4.8" width="15.4" height="15.4" rx="1.4" fill="#fff" stroke="#000" stroke-width="2"/><rect x="7.5" y="7.5" width="10" height="10" fill="#000"/></svg>
<div class="t " style="left:691px;top:205.22999999999996px;line-height:30px;height:30px;color:#222"><span class="c">处理器</span></div>
<div class="t " style="left:961px;top:205.22999999999996px;line-height:30px;height:30px;color:#111">4 (1 sockets, 4 cores) [host]</div>
<div class="b " style="left:647px;top:239.06px;width:1578px;height:36.23px;background:#fff"></div>
<div class="b " style="left:647px;top:275.29px;width:1578px;height:1px;background:#d6d6d6"></div>
<svg class="i" style="left:654.87px;top:245.66px;" width="18.86" height="22.00" viewBox="0 -1536 1536 1792"><path fill="#000" transform="scale(1,-1)" d="M192 256v-128h-112q-16 0 -16 16v16h-48q-16 0 -16 16v32q0 16 16 16h48v16q0 16 16 16h112zM192 512v-128h-112q-16 0 -16 16v16h-48q-16 0 -16 16v32q0 16 16 16h48v16q0 16 16 16h112zM192 768v-128h-112q-16 0 -16 16v16h-48q-16 0 -16 16v32q0 16 16 16h48v16 q0 16 16 16h112zM192 1024v-128h-112q-16 0 -16 16v16h-48q-16 0 -16 16v32q0 16 16 16h48v16q0 16 16 16h112zM192 1280v-128h-112q-16 0 -16 16v16h-48q-16 0 -16 16v32q0 16 16 16h48v16q0 16 16 16h112zM1280 1440v-1472q0 -40 -28 -68t-68 -28h-832q-40 0 -68 28 t-28 68v1472q0 40 28 68t68 28h832q40 0 68 -28t28 -68zM1536 208v-32q0 -16 -16 -16h-48v-16q0 -16 -16 -16h-112v128h112q16 0 16 -16v-16h48q16 0 16 -16zM1536 464v-32q0 -16 -16 -16h-48v-16q0 -16 -16 -16h-112v128h112q16 0 16 -16v-16h48q16 0 16 -16zM1536 720v-32 q0 -16 -16 -16h-48v-16q0 -16 -16 -16h-112v128h112q16 0 16 -16v-16h48q16 0 16 -16zM1536 976v-32q0 -16 -16 -16h-48v-16q0 -16 -16 -16h-112v128h112q16 0 16 -16v-16h48q16 0 16 -16zM1536 1232v-32q0 -16 -16 -16h-48v-16q0 -16 -16 -16h-112v128h112q16 0 16 -16v-16 h48q16 0 16 -16z"/></svg>
<div class="t " style="left:692.7px;top:242.45999999999998px;line-height:30px;height:30px;color:#222">BIOS</div>
<div class="t " style="left:961px;top:242.45999999999998px;line-height:30px;height:30px;color:#111">SeaBIOS</div>
<div class="b " style="left:647px;top:276.29px;width:1578px;height:36.23px;background:#fafafa"></div>
<div class="b " style="left:647px;top:312.52px;width:1578px;height:1px;background:#d6d6d6"></div>
<svg class="i" style="left:652.91px;top:282.89px;" width="23.57" height="22.00" viewBox="0 -1536 1920 1792"><path fill="#000" transform="scale(1,-1)" d="M1792 544v832q0 13 -9.5 22.5t-22.5 9.5h-1600q-13 0 -22.5 -9.5t-9.5 -22.5v-832q0 -13 9.5 -22.5t22.5 -9.5h1600q13 0 22.5 9.5t9.5 22.5zM1920 1376v-1088q0 -66 -47 -113t-113 -47h-544q0 -37 16 -77.5t32 -71t16 -43.5q0 -26 -19 -45t-45 -19h-512q-26 0 -45 19 t-19 45q0 14 16 44t32 70t16 78h-544q-66 0 -113 47t-47 113v1088q0 66 47 113t113 47h1600q66 0 113 -47t47 -113z"/></svg>
<div class="t " style="left:692.7px;top:279.68999999999994px;line-height:30px;height:30px;color:#222"><span class="c">显示</span></div>
<div class="t " style="left:960.5px;top:279.68999999999994px;line-height:30px;height:30px;color:#111"><span class="c">默认</span></div>
<div class="b " style="left:647px;top:313.52px;width:1578px;height:36.23px;background:#fff"></div>
<div class="b " style="left:647px;top:349.75px;width:1578px;height:1px;background:#d6d6d6"></div>
<svg class="i" style="left:652.91px;top:320.12px;" width="23.57" height="22.00" viewBox="0 -1536 1920 1792"><path fill="#000" transform="scale(1,-1)" d="M896 640q0 106 -75 181t-181 75t-181 -75t-75 -181t75 -181t181 -75t181 75t75 181zM1664 128q0 52 -38 90t-90 38t-90 -38t-38 -90q0 -53 37.5 -90.5t90.5 -37.5t90.5 37.5t37.5 90.5zM1664 1152q0 52 -38 90t-90 38t-90 -38t-38 -90q0 -53 37.5 -90.5t90.5 -37.5 t90.5 37.5t37.5 90.5zM1280 731v-185q0 -10 -7 -19.5t-16 -10.5l-155 -24q-11 -35 -32 -76q34 -48 90 -115q7 -11 7 -20q0 -12 -7 -19q-23 -30 -82.5 -89.5t-78.5 -59.5q-11 0 -21 7l-115 90q-37 -19 -77 -31q-11 -108 -23 -155q-7 -24 -30 -24h-186q-11 0 -20 7.5t-10 17.5 l-23 153q-34 10 -75 31l-118 -89q-7 -7 -20 -7q-11 0 -21 8q-144 133 -144 160q0 9 7 19q10 14 41 53t47 61q-23 44 -35 82l-152 24q-10 1 -17 9.5t-7 19.5v185q0 10 7 19.5t16 10.5l155 24q11 35 32 76q-34 48 -90 115q-7 11 -7 20q0 12 7 20q22 30 82 89t79 59q11 0 21 -7 l115 -90q34 18 77 32q11 108 23 154q7 24 30 24h186q11 0 20 -7.5t10 -17.5l23 -153q34 -10 75 -31l118 89q8 7 20 7q11 0 21 -8q144 -133 144 -160q0 -8 -7 -19q-12 -16 -42 -54t-45 -60q23 -48 34 -82l152 -23q10 -2 17 -10.5t7 -19.5zM1920 198v-140q0 -16 -149 -31 q-12 -27 -30 -52q51 -113 51 -138q0 -4 -4 -7q-122 -71 -124 -71q-8 0 -46 47t-52 68q-20 -2 -30 -2t-30 2q-14 -21 -52 -68t-46 -47q-2 0 -124 71q-4 3 -4 7q0 25 51 138q-18 25 -30 52q-149 15 -149 31v140q0 16 149 31q13 29 30 52q-51 113 -51 138q0 4 4 7q4 2 35 20 t59 34t30 16q8 0 46 -46.5t52 -67.5q20 2 30 2t30 -2q51 71 92 112l6 2q4 0 124 -70q4 -3 4 -7q0 -25 -51 -138q17 -23 30 -52q149 -15 149 -31zM1920 1222v-140q0 -16 -149 -31q-12 -27 -30 -52q51 -113 51 -138q0 -4 -4 -7q-122 -71 -124 -71q-8 0 -46 47t-52 68 q-20 -2 -30 -2t-30 2q-14 -21 -52 -68t-46 -47q-2 0 -124 71q-4 3 -4 7q0 25 51 138q-18 25 -30 52q-149 15 -149 31v140q0 16 149 31q13 29 30 52q-51 113 -51 138q0 4 4 7q4 2 35 20t59 34t30 16q8 0 46 -46.5t52 -67.5q20 2 30 2t30 -2q51 71 92 112l6 2q4 0 124 -70 q4 -3 4 -7q0 -25 -51 -138q17 -23 30 -52q149 -15 149 -31z"/></svg>
<div class="t " style="left:692.7px;top:316.91999999999996px;line-height:30px;height:30px;color:#222"><span class="c">机型</span></div>
<div class="t " style="left:961px;top:316.91999999999996px;line-height:30px;height:30px;color:#111">pc-i440fx-8.0</div>
<div class="b " style="left:647px;top:350.75px;width:1578px;height:36.23px;background:#e2eff9"></div>
<div class="b " style="left:647px;top:386.98px;width:1578px;height:1px;background:#d6d6d6"></div>
<svg class="i" style="left:654.87px;top:357.35px;" width="18.86" height="22.00" viewBox="0 -1536 1536 1792"><path fill="#000" transform="scale(1,-1)" d="M768 768q237 0 443 43t325 127v-170q0 -69 -103 -128t-280 -93.5t-385 -34.5t-385 34.5t-280 93.5t-103 128v170q119 -84 325 -127t443 -43zM768 0q237 0 443 43t325 127v-170q0 -69 -103 -128t-280 -93.5t-385 -34.5t-385 34.5t-280 93.5t-103 128v170q119 -84 325 -127 t443 -43zM768 384q237 0 443 43t325 127v-170q0 -69 -103 -128t-280 -93.5t-385 -34.5t-385 34.5t-280 93.5t-103 128v170q119 -84 325 -127t443 -43zM768 1536q208 0 385 -34.5t280 -93.5t103 -128v-128q0 -69 -103 -128t-280 -93.5t-385 -34.5t-385 34.5t-280 93.5 t-103 128v128q0 69 103 128t280 93.5t385 34.5z"/></svg>
<div class="t " style="left:692.7px;top:354.15px;line-height:30px;height:30px;color:#222">SCSI<span class="c">控制器</span></div>
<div class="t " style="left:961px;top:354.15px;line-height:30px;height:30px;color:#111">VirtIO SCSI</div>
<div class="b " style="left:647px;top:387.98px;width:1578px;height:36.23px;background:#fff"></div>
<div class="b " style="left:647px;top:424.21px;width:1578px;height:1px;background:#d6d6d6"></div>
<svg class="i" style="left:649.8px;top:393.28px" width="25" height="25" viewBox="0 0 25 25"><circle cx="12.5" cy="12.5" r="10.7" fill="#fff" stroke="#000" stroke-width="2"/><circle cx="12.5" cy="12.5" r="3.7" fill="#fff" stroke="#000" stroke-width="2"/></svg>
<div class="t " style="left:691.6px;top:391.38px;line-height:30px;height:30px;color:#222">CD/DVD<span class="c">驱动器</span> (ide2)</div>
<div class="t " style="left:961px;top:391.38px;line-height:30px;height:30px;color:#111">none,media=cdrom</div>
<div class="b " style="left:647px;top:425.21px;width:1578px;height:36.23px;background:#fafafa"></div>
<div class="b " style="left:647px;top:461.44px;width:1578px;height:1px;background:#d6d6d6"></div>
<svg class="i" style="left:654.87px;top:431.81px;" width="18.86" height="22.00" viewBox="0 -1536 1536 1792"><path fill="#000" transform="scale(1,-1)" d="M1040 320q0 -33 -23.5 -56.5t-56.5 -23.5t-56.5 23.5t-23.5 56.5t23.5 56.5t56.5 23.5t56.5 -23.5t23.5 -56.5zM1296 320q0 -33 -23.5 -56.5t-56.5 -23.5t-56.5 23.5t-23.5 56.5t23.5 56.5t56.5 23.5t56.5 -23.5t23.5 -56.5zM1408 160v320q0 13 -9.5 22.5t-22.5 9.5 h-1216q-13 0 -22.5 -9.5t-9.5 -22.5v-320q0 -13 9.5 -22.5t22.5 -9.5h1216q13 0 22.5 9.5t9.5 22.5zM178 640h1180l-157 482q-4 13 -16 21.5t-26 8.5h-782q-14 0 -26 -8.5t-16 -21.5zM1536 480v-320q0 -66 -47 -113t-113 -47h-1216q-66 0 -113 47t-47 113v320q0 25 16 75 l197 606q17 53 63 86t101 33h782q55 0 101 -33t63 -86l197 -606q16 -50 16 -75z"/></svg>
<div class="t " style="left:692.7px;top:428.6099999999999px;line-height:30px;height:30px;color:#222"><span class="c">硬盘</span> (sata0)</div>
<div class="t " style="left:961px;top:428.6099999999999px;line-height:30px;height:30px;color:#111">local-lvm:vm-103-disk-0,cache=none,size=60G</div>
<div class="b " style="left:647px;top:462.44px;width:1578px;height:36.23px;background:#fff"></div>
<div class="b " style="left:647px;top:498.67px;width:1578px;height:1px;background:#d6d6d6"></div>
<svg class="i" style="left:654.87px;top:469.04px;" width="18.86" height="22.00" viewBox="0 -1536 1536 1792"><path fill="#000" transform="scale(1,-1)" d="M1040 320q0 -33 -23.5 -56.5t-56.5 -23.5t-56.5 23.5t-23.5 56.5t23.5 56.5t56.5 23.5t56.5 -23.5t23.5 -56.5zM1296 320q0 -33 -23.5 -56.5t-56.5 -23.5t-56.5 23.5t-23.5 56.5t23.5 56.5t56.5 23.5t56.5 -23.5t23.5 -56.5zM1408 160v320q0 13 -9.5 22.5t-22.5 9.5 h-1216q-13 0 -22.5 -9.5t-9.5 -22.5v-320q0 -13 9.5 -22.5t22.5 -9.5h1216q13 0 22.5 9.5t9.5 22.5zM178 640h1180l-157 482q-4 13 -16 21.5t-26 8.5h-782q-14 0 -26 -8.5t-16 -21.5zM1536 480v-320q0 -66 -47 -113t-113 -47h-1216q-66 0 -113 47t-47 113v320q0 25 16 75 l197 606q17 53 63 86t101 33h782q55 0 101 -33t63 -86l197 -606q16 -50 16 -75z"/></svg>
<div class="t " style="left:692.7px;top:465.8399999999999px;line-height:30px;height:30px;color:#222"><span class="c">硬盘</span> (sata1)</div>
<div class="t " style="left:961px;top:465.8399999999999px;line-height:30px;height:30px;color:#111">/dev/disk/by-id/ata-WDC_WD5000AAKX-001CA0_WD-WCAYULE91396,size=488386584K</div>
<div class="b " style="left:647px;top:499.67px;width:1578px;height:36.23px;background:#fafafa"></div>
<div class="b " style="left:647px;top:535.9px;width:1578px;height:1px;background:#d6d6d6"></div>
<svg class="i" style="left:653.70px;top:506.27px;" width="22.00" height="22.00" viewBox="0 -1536 1792 1792"><path fill="#000" transform="scale(1,-1)" d="M1792 352v-192q0 -13 -9.5 -22.5t-22.5 -9.5h-1376v-192q0 -13 -9.5 -22.5t-22.5 -9.5q-12 0 -24 10l-319 320q-9 9 -9 22q0 14 9 23l320 320q9 9 23 9q13 0 22.5 -9.5t9.5 -22.5v-192h1376q13 0 22.5 -9.5t9.5 -22.5zM1792 896q0 -14 -9 -23l-320 -320q-9 -9 -23 -9 q-13 0 -22.5 9.5t-9.5 22.5v192h-1376q-13 0 -22.5 9.5t-9.5 22.5v192q0 13 9.5 22.5t22.5 9.5h1376v192q0 14 9 23t23 9q12 0 24 -10l319 -319q9 -9 9 -23z"/></svg>
<div class="t " style="left:692.7px;top:503.07000000000005px;line-height:30px;height:30px;color:#222"><span class="c">网络设备</span> (net0)</div>
<div class="t " style="left:961px;top:503.07000000000005px;line-height:30px;height:30px;color:#111">e1000=F6:04:36:C2:1A:0E,bridge=vmbr0</div>
<div class="b " style="left:647px;top:536.9px;width:1578px;height:36.23px;background:#fff"></div>
<div class="b " style="left:647px;top:573.13px;width:1578px;height:1px;background:#d6d6d6"></div>
<svg class="i" style="left:653.70px;top:543.50px;" width="22.00" height="22.00" viewBox="0 -1536 1792 1792"><path fill="#000" transform="scale(1,-1)" d="M1792 352v-192q0 -13 -9.5 -22.5t-22.5 -9.5h-1376v-192q0 -13 -9.5 -22.5t-22.5 -9.5q-12 0 -24 10l-319 320q-9 9 -9 22q0 14 9 23l320 320q9 9 23 9q13 0 22.5 -9.5t9.5 -22.5v-192h1376q13 0 22.5 -9.5t9.5 -22.5zM1792 896q0 -14 -9 -23l-320 -320q-9 -9 -23 -9 q-13 0 -22.5 9.5t-9.5 22.5v192h-1376q-13 0 -22.5 9.5t-9.5 22.5v192q0 13 9.5 22.5t22.5 9.5h1376v192q0 14 9 23t23 9q12 0 24 -10l319 -319q9 -9 9 -23z"/></svg>
<div class="t " style="left:692.7px;top:540.3000000000001px;line-height:30px;height:30px;color:#222"><span class="c">网络设备</span> (net1)</div>
<div class="t " style="left:961px;top:540.3000000000001px;line-height:30px;height:30px;color:#111">e1000=06:B7:7F:94:FE:83,bridge=vmbr1</div>
<div class="b " style="left:647px;top:574.13px;width:1578px;height:36.23px;background:#fafafa"></div>
<div class="b " style="left:647px;top:610.36px;width:1578px;height:1px;background:#d6d6d6"></div>
<svg class="i" style="left:653.70px;top:580.73px;" width="22.00" height="22.00" viewBox="0 -1536 1792 1792"><path fill="#000" transform="scale(1,-1)" d="M1792 352v-192q0 -13 -9.5 -22.5t-22.5 -9.5h-1376v-192q0 -13 -9.5 -22.5t-22.5 -9.5q-12 0 -24 10l-319 320q-9 9 -9 22q0 14 9 23l320 320q9 9 23 9q13 0 22.5 -9.5t9.5 -22.5v-192h1376q13 0 22.5 -9.5t9.5 -22.5zM1792 896q0 -14 -9 -23l-320 -320q-9 -9 -23 -9 q-13 0 -22.5 9.5t-9.5 22.5v192h-1376q-13 0 -22.5 9.5t-9.5 22.5v192q0 13 9.5 22.5t22.5 9.5h1376v192q0 14 9 23t23 9q12 0 24 -10l319 -319q9 -9 9 -23z"/></svg>
<div class="t " style="left:692.7px;top:577.5300000000001px;line-height:30px;height:30px;color:#222"><span class="c">网络设备</span> (net2)</div>
<div class="t " style="left:961px;top:577.5300000000001px;line-height:30px;height:30px;color:#111">e1000=86:4F:FE:EE:2E:2A,bridge=vmbr2</div>
<svg class="i" style="left:640px;top:451px" width="1292" height="60" viewBox="0 0 1292 60"><rect x="3.4" y="3.4" width="1283.6" height="52.5" fill="none" stroke="#e60012" stroke-width="2.8"/></svg>
<div class="b " style="left:1080.3px;top:811.8px;width:71.6px;height:7.2px;background:#dedede;border-left:1px solid #ececec;border-right:1px solid #ececec;box-sizing:border-box"></div>
<svg class="i" style="left:1108px;top:812px" width="18" height="8" viewBox="0 0 18 8"><path d="M2.4 2.2L8.8 6.6L15.2 2.2" fill="none" stroke="#c3c3c3" stroke-width="2.2"/></svg>
<div class="b " style="left:8px;top:819px;width:2215.9px;height:299px;background:#fff"></div>
<div class="b " style="left:8px;top:819px;width:2215.9px;height:53px;background:#f5f5f5"></div>
<div class="b " style="left:24px;top:828.4px;width:60px;height:33.6px;background:#3892d4;border-radius:3.5px"></div>
<div class="t " style="left:34.5px;top:830.6px;line-height:30px;height:30px;color:#fff"><span class="c">任务</span></div>
<div class="t " style="left:109px;top:830.6px;line-height:30px;height:30px;color:#333"><span class="c">集群日志</span></div>
<div class="b " style="left:8px;top:872px;width:2215.9px;height:1px;background:#cfcfcf"></div>
<div class="b " style="left:8px;top:873px;width:225px;height:43px;background:#eef5fb"></div>
<div class="t " style="left:24px;top:879.3px;line-height:30px;height:30px;color:#858585"><span class="c">开始时间</span></div>
<div class="t " style="left:249px;top:879.3px;line-height:30px;height:30px;color:#858585"><span class="c">结束时间</span></div>
<div class="t " style="left:474px;top:879.3px;line-height:30px;height:30px;color:#858585"><span class="c">节点</span></div>
<div class="t " style="left:624px;top:879.3px;line-height:30px;height:30px;color:#858585"><span class="c">用户名</span></div>
<div class="t " style="left:849px;top:879.3px;line-height:30px;height:30px;color:#858585"><span class="c">描述</span></div>
<div class="t " style="left:1918px;top:879.3px;line-height:30px;height:30px;color:#858585"><span class="c">状态</span></div>
<div class="b " style="left:232.5px;top:873px;width:1px;height:43px;background:#cfcfcf"></div>
<div class="b " style="left:457.5px;top:873px;width:1px;height:43px;background:#cfcfcf"></div>
<div class="b " style="left:607.5px;top:873px;width:1px;height:43px;background:#cfcfcf"></div>
<div class="b " style="left:832.5px;top:873px;width:1px;height:43px;background:#cfcfcf"></div>
<div class="b " style="left:1901.5px;top:873px;width:1px;height:43px;background:#cfcfcf"></div>
<div class="b " style="left:2201.5px;top:873px;width:1px;height:43px;background:#cfcfcf"></div>
<svg class="i" style="left:106px;top:884px" width="16" height="22" viewBox="0 0 16 22"><path d="M8 1.5V19.5M1.8 13.2L8 19.8L14.2 13.2" fill="none" stroke="#9a9a9a" stroke-width="1.5"/></svg>
<div class="b " style="left:8px;top:916px;width:2215.9px;height:1px;background:#cfcfcf"></div>
<div class="b" style="left:8px;top:918.2px;width:2215.9px;height:199.8px;overflow:hidden">
<div class="b" style="left:0;top:0.00px;width:2195px;height:36.15px;background:#fff"></div>
<div class="b" style="left:0;top:36.15px;width:2195px;height:1px;background:#d6d6d6"></div>
<div class="t" style="left:15.3px;top:3.8999999999999986px;line-height:30px;height:30px;color:#111"><span class="c">十月</span> 30 22:52:11</div>
<div class="t" style="left:240.3px;top:3.8999999999999986px;line-height:30px;height:30px;color:#111"><span class="c">十月</span> 30 22:52:46</div>
<div class="t" style="left:466px;top:3.8999999999999986px;line-height:30px;height:30px;color:#111">server</div>
<div class="t" style="left:616px;top:3.8999999999999986px;line-height:30px;height:30px;color:#111">root@pam</div>
<div class="t" style="left:841px;top:3.8999999999999986px;line-height:30px;height:30px;color:#111">Shell</div>
<div class="t" style="left:1910px;top:3.8999999999999986px;line-height:30px;height:30px;color:#111">OK</div>
<div class="b" style="left:0;top:37.15px;width:2195px;height:36.15px;background:#fafafa"></div>
<div class="b" style="left:0;top:73.30px;width:2195px;height:1px;background:#d6d6d6"></div>
<div class="t" style="left:15.3px;top:41.05px;line-height:30px;height:30px;color:#111"><span class="c">十月</span> 30 22:51:41</div>
<div class="t" style="left:240.3px;top:41.05px;line-height:30px;height:30px;color:#111"><span class="c">十月</span> 30 22:51:47</div>
<div class="t" style="left:466px;top:41.05px;line-height:30px;height:30px;color:#111">server</div>
<div class="t" style="left:616px;top:41.05px;line-height:30px;height:30px;color:#111">root@pam</div>
<div class="t" style="left:841px;top:41.05px;line-height:30px;height:30px;color:#111">Shell</div>
<div class="t" style="left:1910px;top:41.05px;line-height:30px;height:30px;color:#111">OK</div>
<div class="b" style="left:0;top:74.30px;width:2195px;height:36.15px;background:#fff"></div>
<div class="b" style="left:0;top:110.45px;width:2195px;height:1px;background:#d6d6d6"></div>
<div class="t" style="left:15.3px;top:78.19999999999999px;line-height:30px;height:30px;color:#111"><span class="c">十月</span> 30 22:50:44</div>
<div class="t" style="left:240.3px;top:78.19999999999999px;line-height:30px;height:30px;color:#111"><span class="c">十月</span> 30 22:51:33</div>
<div class="t" style="left:466px;top:78.19999999999999px;line-height:30px;height:30px;color:#111">server</div>
<div class="t" style="left:616px;top:78.19999999999999px;line-height:30px;height:30px;color:#111">root@pam</div>
<div class="t" style="left:841px;top:78.19999999999999px;line-height:30px;height:30px;color:#111">Shell</div>
<div class="t" style="left:1910px;top:78.19999999999999px;line-height:30px;height:30px;color:#111">OK</div>
<div class="b" style="left:0;top:111.45px;width:2195px;height:36.15px;background:#fafafa"></div>
<div class="b" style="left:0;top:147.60px;width:2195px;height:1px;background:#d6d6d6"></div>
<div class="t" style="left:15.3px;top:115.35px;line-height:30px;height:30px;color:#111"><span class="c">十月</span> 30 22:50:17</div>
<div class="t" style="left:240.3px;top:115.35px;line-height:30px;height:30px;color:#111"><span class="c">十月</span> 30 22:50:39</div>
<div class="t" style="left:466px;top:115.35px;line-height:30px;height:30px;color:#111">server</div>
<div class="t" style="left:616px;top:115.35px;line-height:30px;height:30px;color:#111">root@pam</div>
<div class="t" style="left:841px;top:115.35px;line-height:30px;height:30px;color:#111">VM/CT 103 - <span class="c">控制台</span></div>
<div class="t" style="left:1910px;top:115.35px;line-height:30px;height:30px;color:#111">OK</div>
<div class="b" style="left:0;top:148.60px;width:2195px;height:36.15px;background:#fff"></div>
<div class="b" style="left:0;top:184.75px;width:2195px;height:1px;background:#d6d6d6"></div>
<div class="t" style="left:15.3px;top:152.5px;line-height:30px;height:30px;color:#111"><span class="c">十月</span> 30 22:50:02</div>
<div class="t" style="left:240.3px;top:152.5px;line-height:30px;height:30px;color:#111"><span class="c">十月</span> 30 22:50:10</div>
<div class="t" style="left:466px;top:152.5px;line-height:30px;height:30px;color:#111">server</div>
<div class="t" style="left:616px;top:152.5px;line-height:30px;height:30px;color:#111">root@pam</div>
<div class="t" style="left:841px;top:152.5px;line-height:30px;height:30px;color:#111">Shell</div>
<div class="t" style="left:1910px;top:152.5px;line-height:30px;height:30px;color:#111">OK</div>
<div class="b" style="left:0;top:185.75px;width:2195px;height:36.15px;background:#fafafa"></div>
<div class="b" style="left:0;top:221.90px;width:2195px;height:1px;background:#d6d6d6"></div>
<div class="t" style="left:15.3px;top:189.65px;line-height:30px;height:30px;color:#111"><span class="c">十月</span> 30 22:49:07</div>
<div class="t" style="left:240.3px;top:189.65px;line-height:30px;height:30px;color:#111"><span class="c">十月</span> 30 22:47:00</div>
<div class="t" style="left:466px;top:189.65px;line-height:30px;height:30px;color:#111">server</div>
<div class="t" style="left:616px;top:189.65px;line-height:30px;height:30px;color:#111">root@pam</div>
<div class="t" style="left:841px;top:189.65px;line-height:30px;height:30px;color:#111">Shell</div>
<div class="t" style="left:1910px;top:189.65px;line-height:30px;height:30px;color:#111">OK</div>
</div>
<div class="b " style="left:2203px;top:917px;width:20.9px;height:201px;background:#fcfcfc"></div>
<svg class="i" style="left:2207px;top:930px" width="14" height="8" viewBox="0 0 14 8"><path d="M0.4 7.6L7 0.8L13.6 7.6Z" fill="#8b8b8b"/></svg>
<svg class="i" style="left:2207px;top:1099px" width="14" height="8" viewBox="0 0 14 8"><path d="M0.4 0.4L7 7.2L13.6 0.4Z" fill="#8b8b8b"/></svg>
<div class="b " style="left:2207.5px;top:951px;width:12.5px;height:29.5px;background:#8b8b8b;border-radius:6.25px"></div>
</body></html>
